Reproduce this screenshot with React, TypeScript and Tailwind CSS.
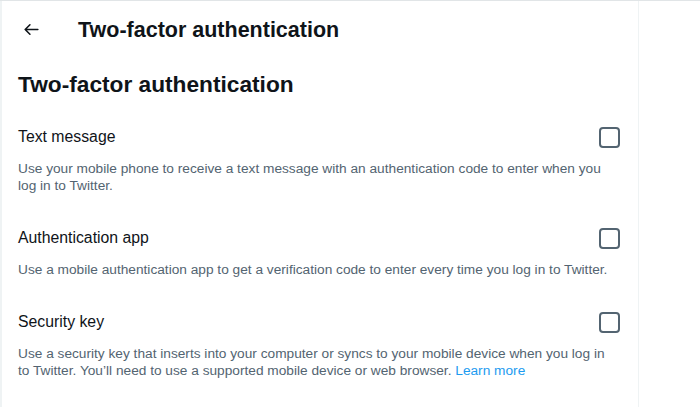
import React from 'react'

const options = [
  {
    title: 'Text message',
    desc: 'Use your mobile phone to receive a text message with an authentication code to enter when you log in to Twitter.',
  },
  {
    title: 'Authentication app',
    desc: 'Use a mobile authentication app to get a verification code to enter every time you log in to Twitter.',
  },
  {
    title: 'Security key',
    desc: 'Use a security key that inserts into your computer or syncs to your mobile device when you log in to Twitter. You’ll need to use a supported mobile device or web browser.',
    link: 'Learn more',
  },
]

export default function App() {
  return (
    <div className="flex h-[407px] w-[700px] overflow-hidden border-t border-[#e1e5e7] bg-white font-['Liberation_Sans',Arial,sans-serif] text-[#0f1419]">
      <div className="w-[639px] shrink-0 border-r border-l-2 border-[#eff3f4]">
        {/* Header */}
        <div className="flex h-[57px] items-center px-[19px]">
          <button className="flex h-5 w-5 items-center justify-center">
            <svg viewBox="0 0 24 24" className="h-[19px] w-[19px]" fill="none" stroke="#0f1419" strokeWidth="2" strokeLinecap="round" strokeLinejoin="round">
              <path d="M20 12H4M10 6l-6 6 6 6" />
            </svg>
          </button>
          <h1 className="ml-[37px] text-[21.5px] font-bold leading-6">Two-factor authentication</h1>
        </div>

        <div className="px-4">
          <h2 className="pt-[12px] text-[22.7px] font-bold leading-[28px]">Two-factor authentication</h2>

          <div className="mt-[24px] space-y-[29px]">
            {options.map(opt => (
              <div key={opt.title}>
                <div className="flex h-[30px] items-center justify-between">
                  <span className="text-[15.8px]">{opt.title}</span>
                  <span className="mr-[2px] h-[21px] w-[21px] rounded-[4px] border-2 border-[#536471]"></span>
                </div>
                <p className="mt-[8px] pr-[10px] text-[13.7px] leading-[17px] text-[#536471]">
                  {opt.desc}
                  {opt.link && (
                    <>
                      {' '}
                      <a className="text-[#1d9bf0]">{opt.link}</a>
                    </>
                  )}
                </p>
              </div>
            ))}
          </div>
        </div>
      </div>
      <div className="flex-1"></div>
    </div>
  )
}
